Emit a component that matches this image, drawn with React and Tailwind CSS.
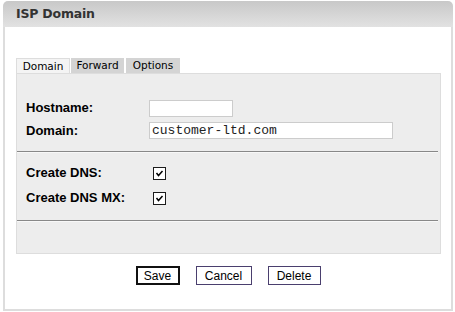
export default function App() {
    const label = "font-['Liberation_Sans',Arial,sans-serif] font-bold text-[13px] text-black w-[123px] shrink-0";
    const checkbox = (
        <span className="w-[13px] h-[13px] bg-white border border-[#1c1c1c] flex items-center justify-center">
            <svg width="9" height="9" viewBox="0 0 9 9">
                <path d="M1.5 4 L3.5 6.5 L7.5 2" stroke="#000" strokeWidth="1.5" fill="none" />
            </svg>
        </span>
    );

    return (
        <div className="w-[455px] h-[312px] bg-white pt-px px-[3px]">
            <div className="w-[450px] h-[310px] flex flex-col">
                <div className="h-[26px] rounded-t-[5px] bg-gradient-to-b from-[#c8c8c8] to-[#e2e2e2] px-[13px] flex items-center">
                    <span className="font-['DejaVu_Sans',Verdana,sans-serif] font-bold text-[12.5px] text-[#333] tracking-[-0.2px]">ISP Domain</span>
                </div>
                <div className="flex-1 border-x-2 border-b-2 border-[#ddd] px-[11px] pt-[31px]">
                    <div className="flex font-['DejaVu_Sans',Verdana,sans-serif] text-[10.5px] text-black leading-none h-[15px]">
                        <div className="w-[54px] bg-[#f4f4f4] border border-b-0 border-[#ddd] flex items-center justify-center">Domain</div>
                        <div className="w-[53px] ml-px bg-[#d4d4d4] flex items-center justify-center">Forward</div>
                        <div className="w-[54px] ml-[2px] bg-[#d4d4d4] flex items-center justify-center">Options</div>
                    </div>
                    <div className="w-[425px] h-[181px] bg-[#ededed] border border-[#ddd] flex flex-col">
                        <div className="pl-[9px] pt-[25px] flex flex-col">
                            <div className="flex items-center h-[18px]">
                                <span className={label}>Hostname:</span>
                                <span className="w-[84px] h-[17px] bg-white border border-[#ccc]"></span>
                            </div>
                            <div className="flex items-center h-[17px] mt-[5px]">
                                <span className={label}>Domain:</span>
                                <span className="w-[244px] h-[17px] bg-white border border-[#ccc] font-['Liberation_Mono','Courier_New',monospace] text-[13px] leading-[15px] pl-[2px] text-[#222]">customer-ltd.com</span>
                            </div>
                        </div>
                        <div className="mt-[12px] w-[421px] border-t border-[#888] border-b border-b-[#f8f8f8]"></div>
                        <div className="pl-[9px] pt-[11px] flex flex-col">
                            <div className="flex items-center h-[18px]">
                                <span className={label}>Create DNS:</span>
                                <span className="ml-[4px]">{checkbox}</span>
                            </div>
                            <div className="flex items-center h-[18px] mt-[7px]">
                                <span className={label}>Create DNS MX:</span>
                                <span className="ml-[4px]">{checkbox}</span>
                            </div>
                        </div>
                        <div className="mt-[13px] w-[421px] border-t border-[#888] border-b border-b-[#f8f8f8]"></div>
                    </div>
                    <div className="flex justify-center gap-[16px] mt-[12px] font-['Liberation_Sans',Arial,sans-serif] text-[12px] text-black">
                        <button className="w-[44px] h-[19px] border-2 border-[#111] bg-white leading-none">Save</button>
                        <button className="w-[56px] h-[19px] border border-[#4a3f6e] bg-white leading-none">Cancel</button>
                        <button className="w-[53px] h-[19px] border border-[#4a3f6e] bg-white leading-none">Delete</button>
                    </div>
                </div>
            </div>
        </div>
    );
}
